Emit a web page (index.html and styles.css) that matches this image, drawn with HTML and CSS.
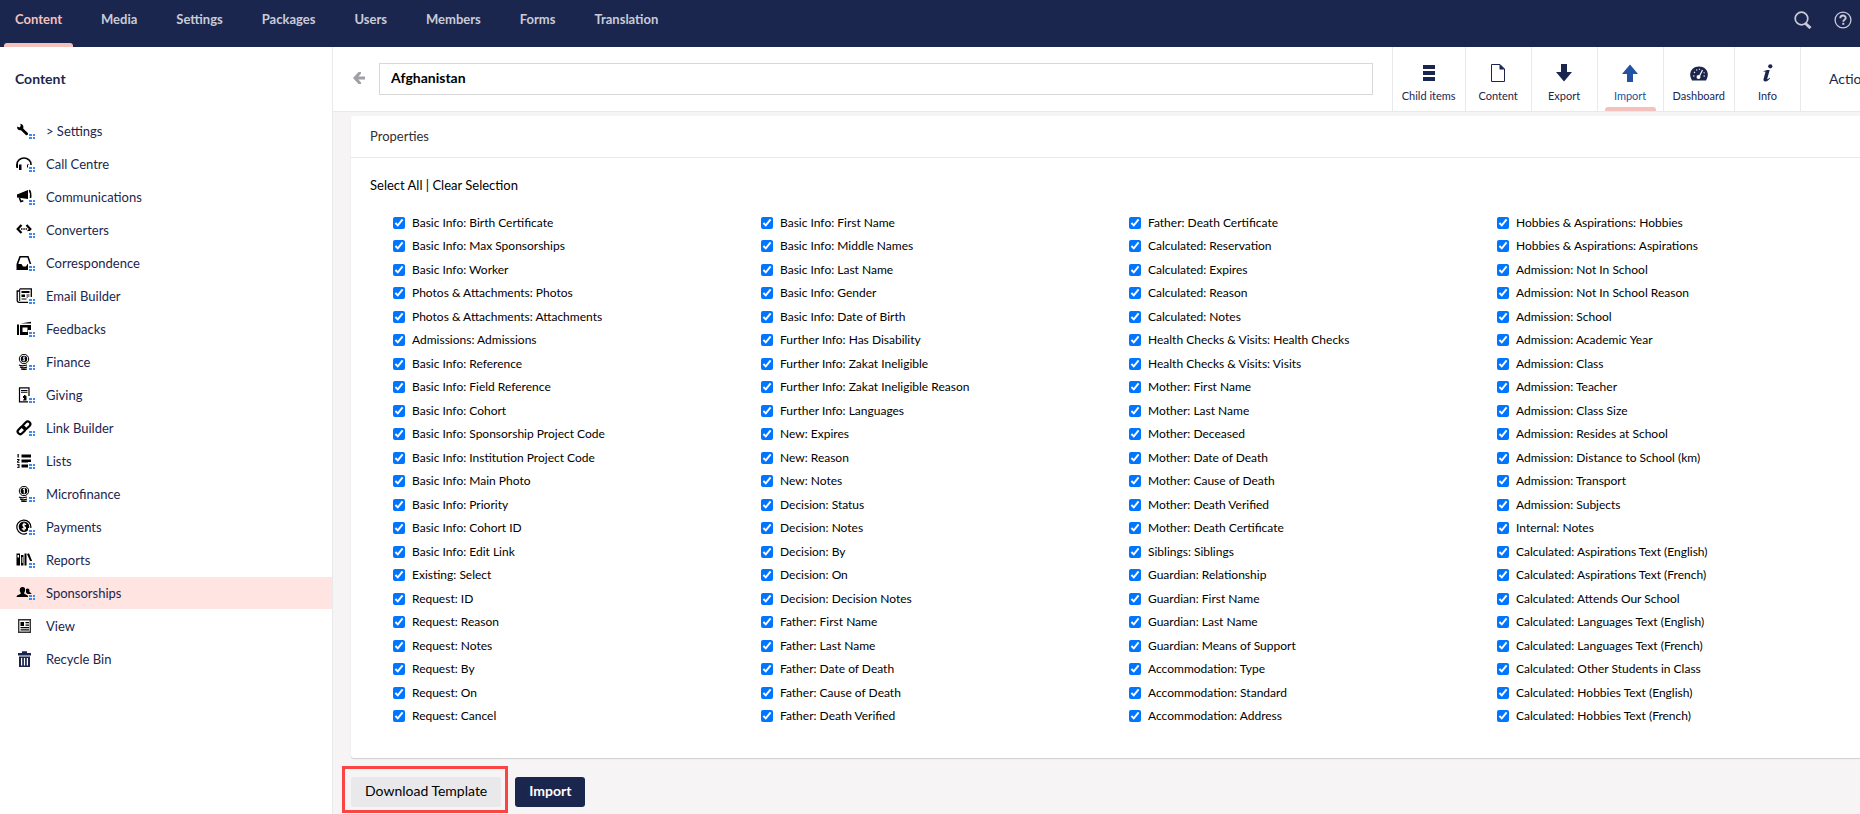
FILE: index.html
```html
<!DOCTYPE html>
<html lang="en">
<head>
<meta charset="utf-8">
<title>Afghanistan - Content</title>
<link rel="stylesheet" href="styles.css">
</head>
<body>
<svg class="defs" aria-hidden="true">
  <symbol id="dots" viewBox="0 0 20 16">
    <path fill="#fff" d="M12 9h8v7h-8z"/>
    <path fill="#3b8af0" d="M13 11h3v2h-3zM17 11h2v2h-2zM13 14h3v2h-3zM17 14h2v2h-2z"/>
  </symbol>
</svg>
<header class="topbar">
  <nav class="sections" aria-label="Sections">
    <a class="section is-active" href="#">Content</a>
    <a class="section" href="#">Media</a>
    <a class="section" href="#">Settings</a>
    <a class="section" href="#">Packages</a>
    <a class="section" href="#">Users</a>
    <a class="section" href="#">Members</a>
    <a class="section" href="#">Forms</a>
    <a class="section" href="#">Translation</a>
  </nav>
  <div class="tools">
    <button class="tool" type="button" aria-label="Search"><svg viewBox="0 0 18 18"><circle cx="7.5" cy="7.5" r="6.3" fill="none" stroke="currentColor" stroke-width="1.7"/><path d="M11.5 12.5l5 4.5" fill="none" stroke="currentColor" stroke-width="3"/></svg></button>
    <button class="tool" type="button" aria-label="Help"><svg viewBox="0 0 18 18" fill="none" stroke="currentColor"><circle cx="9" cy="9" r="7.9" stroke-width="1.3"/><path d="M6.3 7.2c0-3.6 5.4-3.4 5.4-.3 0 1.9-2.4 1.9-2.4 3.8" stroke-width="1.9"/><path d="M8.3 12.8h2" stroke-width="2"/></svg></button>
  </div>
</header>
<div class="layout">
  <aside class="sidebar">
    <h2 class="tree-title">Content</h2>
    <ul class="tree">
      <li><a class="node" href="#"><svg class="icon" viewBox="0 0 20 16"><path d="M4.2.8L4.800 2.900 3.400 4.500 1.200 3.500C.6 6 2.600 7.800 5 7.200L9.800 12c1.300 1 3-.6 2-2L7.200 5.500C8 3 6.600 1 4.200.8z"/><use href="#dots"/></svg>&gt; Settings</a></li>
      <li><a class="node" href="#"><svg class="icon" viewBox="0 0 20 16"><path d="M1 11V8.500a7 6.500 0 0 1 14 0V10" fill="none" stroke="#000" stroke-width="1.500"/><path d="M3 8.500h2.500v5.500H3zM11 8.500h2v3h-2zM.3 8H2v4H.3z"/><use href="#dots"/></svg>Call Centre</a></li>
      <li><a class="node" href="#"><svg class="icon" viewBox="0 0 20 16"><path d="M1 5.500L12 1v9L1 8.500z"/><path d="M13.300 1c1.600 2.500 1.700 5 1.200 8M3.500 9l1.300 3.500 2.500-.8" fill="none" stroke="#000" stroke-width="1.500"/><use href="#dots"/></svg>Communications</a></li>
      <li><a class="node" href="#"><svg class="icon" viewBox="0 0 20 16"><path d="M5.500 3L1.700 7l3.800 4M10.500 3l3.800 4-2.300 2.500" fill="none" stroke="#000" stroke-width="2.200"/><path d="M5 6.200h1.500v1.500H5zM7.300 6.200h1.500v1.500H7.300zM9.600 6.200h1.500v1.500H9.600z"/><use href="#dots"/></svg>Converters</a></li>
      <li><a class="node" href="#"><svg class="icon" viewBox="0 0 20 16"><path d="M3.500 1h9l2.800 8v6H.5V9zM4.600 2.500L2.300 9h3.200l1.500 2.500h3L11.500 9h2.200l-2.300-6.500z" fill-rule="evenodd"/><use href="#dots"/></svg>Correspondence</a></li>
      <li><a class="node" href="#"><svg class="icon" viewBox="0 0 20 16"><path d="M3.700.8h11.600v13.500H3.200c-1.500 0-2-.8-2-2V3h2.500" fill="none" stroke="#000" stroke-width="1.300"/><path d="M3.700 1v12" stroke="#000"/><path d="M5.500 3h8v2h-8zM5.500 6.500h3.500V9H5.500zM10.500 6.500h3v1h-3zM10.500 8.500h3v1h-3zM5.500 10.500h5v1h-5z"/><use href="#dots"/></svg>Email Builder</a></li>
      <li><a class="node" href="#"><svg class="icon" viewBox="0 0 20 16"><path d="M1 3.500h2v10.500H1zM4.500 2.500L15 .8V2.500zM4 4h11v10H4zM6.500 6.500v4.500h5V6.500z" fill-rule="evenodd"/><use href="#dots"/></svg>Feedbacks</a></li>
      <li><a class="node" href="#"><svg class="icon" viewBox="0 0 20 16"><circle cx="8" cy="5" r="4.700" fill="none" stroke="#000" stroke-width="1"/><circle cx="8" cy="5" r="3.200"/><path d="M9.300 3.500c-1.500-1-3 .6-1.400 1.400 1.800.7.500 2.400-1.400 1.500M8 2.500v5" fill="none" stroke="#fff" stroke-width=".8"/><path d="M3 11c2 1 5 1 8 0M4 13c2 1 5 1 7 0M5 15c2 .6 4 .6 6 0" fill="none" stroke="#000" stroke-width="1.200"/><use href="#dots"/></svg>Finance</a></li>
      <li><a class="node" href="#"><svg class="icon" viewBox="0 0 20 16"><path d="M3.500.8h9.500v14H3.500z" fill="none" stroke="#000" stroke-width="1.200"/><path d="M5 3h6.500v1.200H5zM5 5.200h6.500v.8H5zM8 8h1.500v1H8zM7 9h3.500v2H7zM8 11h2.500v2.500H7v-1h1z"/><use href="#dots"/></svg>Giving</a></li>
      <li><a class="node" href="#"><svg class="icon" viewBox="0 0 20 16"><g fill="none" stroke="#000" stroke-width="2.200"><rect x="6.200" y="2.700" width="8.600" height="5.200" rx="2.600" transform="rotate(-45 10.500 5.300)"/><rect x="1.200" y="7.700" width="8.600" height="5.200" rx="2.600" transform="rotate(-45 5.500 10.300)"/></g><use href="#dots"/></svg>Link Builder</a></li>
      <li><a class="node" href="#"><svg class="icon" viewBox="0 0 20 16"><path d="M5.500 1.500H15v3H5.500zM5.500 6.500H15v3H5.500zM5.500 11.500H12v3H5.500zM1.500 1h1.300v3.500H1.500zM1 6h2.500v1.500L2 9h1.500v.8H1V8.500L2.500 7H1zM1 11h2.500v4H1v-.8h1.500v-1H1.500v-.7h1v-.7H1z"/><use href="#dots"/></svg>Lists</a></li>
      <li><a class="node" href="#"><svg class="icon" viewBox="0 0 20 16"><circle cx="8" cy="5" r="4.700" fill="none" stroke="#000" stroke-width="1"/><circle cx="8" cy="5" r="3.300"/><path d="M7 3.500l1.300-.5v4.500" fill="none" stroke="#fff" stroke-width="1.200"/><path d="M3 11c2 1 5 1 8 0M4 13c2 1 5 1 7 0M5 15c2 .6 4 .6 6 0" fill="none" stroke="#000" stroke-width="1.200"/><use href="#dots"/></svg>Microfinance</a></li>
      <li><a class="node" href="#"><svg class="icon" viewBox="0 0 20 16"><path d="M11 14.300A7 7 0 1 1 14.800 9" fill="none" stroke="#000" stroke-width="1.200"/><circle cx="8" cy="7.800" r="5.300"/><path d="M10 5.800C8.300 4 5.500 5.800 7.700 7.400c3.600 1.400 1.400 4-1.900 2.100M8 3.800v8" fill="none" stroke="#fff" stroke-width="1.200"/><use href="#dots"/></svg>Payments</a></li>
      <li><a class="node" href="#"><svg class="icon" viewBox="0 0 20 16"><path d="M.5 1.500H4v12H.5zM1.500 3v2.500H3V3z" fill-rule="evenodd"/><path d="M5 3h2.500v10.500H5zM8.500 1.500h2v12h-2zM11 2l2-.8 4 10-1.500 1z"/><path d="M6.300 5v6" stroke="#fff" stroke-width=".8"/><use href="#dots"/></svg>Reports</a></li>
      <li><a class="node is-selected" href="#"><svg class="icon" viewBox="0 0 20 16"><path d="M6.500 2C9 2 9.500 4 9 6c-.3 1-.8 1.500-.8 2.500 0 .8 3.800 1.200 4.300 3.500H.5c.3-2.500 4.300-2.500 4.300-3.500S4 7 3.800 6C3.400 4 4.200 2 6.500 2z"/><path d="M11.500 3.500c1.800 0 2.300 1.500 1.800 2.800-.3.900 2 1.200 2.200 2.700h-4L10 7.500V4z"/><path fill="#ffe4e1" d="M12 9h8v7h-8z"/><path fill="#3b8af0" d="M13 10h3v2h-3zM17 10h2v2h-2zM13 13h3v2h-3zM17 13h2v2h-2z"/></svg>Sponsorships</a></li>
      <li><a class="node" href="#"><svg class="icon" viewBox="0 0 20 16"><path d="M2.700 1.700h11.600v12.600H2.700z" fill="none" stroke="#333" stroke-width="1.400"/><path d="M4.500 4H8v4H4.500zM9.500 4H13v1.200H9.500zM9.500 6.500H13v1.200H9.500zM4.500 9H13v1.200H4.500zM4.500 11.200H13v1.200H4.500z"/></svg>View</a></li>
      <li><a class="node" href="#"><svg class="icon icon-navy" viewBox="0 0 20 16"><path d="M2 2h4V.3h5V2h4v2.500H2zM3 5.500h11V16H3zM5 7v7.500h1.200V7zM7.900 7v7.500h1.200V7zM10.800 7v7.500H12V7z" fill-rule="evenodd"/></svg>Recycle Bin</a></li>
    </ul>
  </aside>
  <main class="editor">
    <div class="editor-header">
      <button class="back" type="button" aria-label="Back"><svg viewBox="0 0 12 12"><path d="M5.500 0h2.500v1.500L5.500 4.500H12v3H5.500L8 10.500V12H5.500L0 6z"/></svg></button>
      <input class="name" type="text" aria-label="Name" value="Afghanistan">
      <nav class="apps" aria-label="Views">
        <button class="app" type="button"><svg viewBox="0 0 18 18"><path d="M3 1h12v4H3zM3 7h12v4H3zM3 13h12v4H3z"/></svg>Child items</button>
        <button class="app" type="button"><svg viewBox="0 0 18 18"><path d="M2.500.5h8.500l4.500 4.500v12.500h-13z" fill="none" stroke="currentColor"/><path d="M10.500 0L16 5.500h-5.500z"/></svg>Content</button>
        <button class="app" type="button"><svg viewBox="0 0 18 18"><path d="M6 0h6v8h5l-8 9.500L1 8h5z"/></svg>Export</button>
        <button class="app is-current" type="button"><svg viewBox="0 0 18 18"><path d="M6 18h6v-8h5L9 .5 1 10h5z"/></svg>Import</button>
        <button class="app" type="button"><svg viewBox="0 0 18 18"><path d="M2 16.500C-2.500 9 2 2.500 9 2.500s11.500 6.500 7 14z"/><path d="M8.500 14l4-8M3 12h1.500M4 8l1 .7M6.500 5.500l.5 1M9.500 4.800v1M15 12h-1.500M14.500 8.500l-.8.500" fill="none" stroke="#fff" stroke-width="1.200"/><circle cx="8.500" cy="13" r="2" fill="#fff"/></svg>Dashboard</button>
        <button class="app" type="button"><svg viewBox="0 0 18 18"><circle cx="11.300" cy="2.300" r="2.100"/><path d="M4.500 7.200c2-1 3.800-1.300 6.200-1.200L8.300 14.500c-.3 1.200.8.800 2.400-.7l.5.500c-1.500 2-3 3.200-4.700 3.200-1.900 0-2.300-1.200-1.900-2.800L6.500 8c0-.6-.8-.6-1.900-.1z"/></svg>Info</button>
      </nav>
      <button class="actions" type="button">Actions</button>
    </div>
    <section class="card">
      <h3 class="card-title">Properties</h3>
      <div class="card-body">
        <div class="selection"><a href="#">Select All</a> | <a href="#">Clear Selection</a></div>
        <div class="fields">
          <label><input type="checkbox" checked>Basic Info: Birth Certificate</label>
          <label><input type="checkbox" checked>Basic Info: Max Sponsorships</label>
          <label><input type="checkbox" checked>Basic Info: Worker</label>
          <label><input type="checkbox" checked>Photos &amp; Attachments: Photos</label>
          <label><input type="checkbox" checked>Photos &amp; Attachments: Attachments</label>
          <label><input type="checkbox" checked>Admissions: Admissions</label>
          <label><input type="checkbox" checked>Basic Info: Reference</label>
          <label><input type="checkbox" checked>Basic Info: Field Reference</label>
          <label><input type="checkbox" checked>Basic Info: Cohort</label>
          <label><input type="checkbox" checked>Basic Info: Sponsorship Project Code</label>
          <label><input type="checkbox" checked>Basic Info: Institution Project Code</label>
          <label><input type="checkbox" checked>Basic Info: Main Photo</label>
          <label><input type="checkbox" checked>Basic Info: Priority</label>
          <label><input type="checkbox" checked>Basic Info: Cohort ID</label>
          <label><input type="checkbox" checked>Basic Info: Edit Link</label>
          <label><input type="checkbox" checked>Existing: Select</label>
          <label><input type="checkbox" checked>Request: ID</label>
          <label><input type="checkbox" checked>Request: Reason</label>
          <label><input type="checkbox" checked>Request: Notes</label>
          <label><input type="checkbox" checked>Request: By</label>
          <label><input type="checkbox" checked>Request: On</label>
          <label><input type="checkbox" checked>Request: Cancel</label>
          <label><input type="checkbox" checked>Basic Info: First Name</label>
          <label><input type="checkbox" checked>Basic Info: Middle Names</label>
          <label><input type="checkbox" checked>Basic Info: Last Name</label>
          <label><input type="checkbox" checked>Basic Info: Gender</label>
          <label><input type="checkbox" checked>Basic Info: Date of Birth</label>
          <label><input type="checkbox" checked>Further Info: Has Disability</label>
          <label><input type="checkbox" checked>Further Info: Zakat Ineligible</label>
          <label><input type="checkbox" checked>Further Info: Zakat Ineligible Reason</label>
          <label><input type="checkbox" checked>Further Info: Languages</label>
          <label><input type="checkbox" checked>New: Expires</label>
          <label><input type="checkbox" checked>New: Reason</label>
          <label><input type="checkbox" checked>New: Notes</label>
          <label><input type="checkbox" checked>Decision: Status</label>
          <label><input type="checkbox" checked>Decision: Notes</label>
          <label><input type="checkbox" checked>Decision: By</label>
          <label><input type="checkbox" checked>Decision: On</label>
          <label><input type="checkbox" checked>Decision: Decision Notes</label>
          <label><input type="checkbox" checked>Father: First Name</label>
          <label><input type="checkbox" checked>Father: Last Name</label>
          <label><input type="checkbox" checked>Father: Date of Death</label>
          <label><input type="checkbox" checked>Father: Cause of Death</label>
          <label><input type="checkbox" checked>Father: Death Verified</label>
          <label><input type="checkbox" checked>Father: Death Certificate</label>
          <label><input type="checkbox" checked>Calculated: Reservation</label>
          <label><input type="checkbox" checked>Calculated: Expires</label>
          <label><input type="checkbox" checked>Calculated: Reason</label>
          <label><input type="checkbox" checked>Calculated: Notes</label>
          <label><input type="checkbox" checked>Health Checks &amp; Visits: Health Checks</label>
          <label><input type="checkbox" checked>Health Checks &amp; Visits: Visits</label>
          <label><input type="checkbox" checked>Mother: First Name</label>
          <label><input type="checkbox" checked>Mother: Last Name</label>
          <label><input type="checkbox" checked>Mother: Deceased</label>
          <label><input type="checkbox" checked>Mother: Date of Death</label>
          <label><input type="checkbox" checked>Mother: Cause of Death</label>
          <label><input type="checkbox" checked>Mother: Death Verified</label>
          <label><input type="checkbox" checked>Mother: Death Certificate</label>
          <label><input type="checkbox" checked>Siblings: Siblings</label>
          <label><input type="checkbox" checked>Guardian: Relationship</label>
          <label><input type="checkbox" checked>Guardian: First Name</label>
          <label><input type="checkbox" checked>Guardian: Last Name</label>
          <label><input type="checkbox" checked>Guardian: Means of Support</label>
          <label><input type="checkbox" checked>Accommodation: Type</label>
          <label><input type="checkbox" checked>Accommodation: Standard</label>
          <label><input type="checkbox" checked>Accommodation: Address</label>
          <label><input type="checkbox" checked>Hobbies &amp; Aspirations: Hobbies</label>
          <label><input type="checkbox" checked>Hobbies &amp; Aspirations: Aspirations</label>
          <label><input type="checkbox" checked>Admission: Not In School</label>
          <label><input type="checkbox" checked>Admission: Not In School Reason</label>
          <label><input type="checkbox" checked>Admission: School</label>
          <label><input type="checkbox" checked>Admission: Academic Year</label>
          <label><input type="checkbox" checked>Admission: Class</label>
          <label><input type="checkbox" checked>Admission: Teacher</label>
          <label><input type="checkbox" checked>Admission: Class Size</label>
          <label><input type="checkbox" checked>Admission: Resides at School</label>
          <label><input type="checkbox" checked>Admission: Distance to School (km)</label>
          <label><input type="checkbox" checked>Admission: Transport</label>
          <label><input type="checkbox" checked>Admission: Subjects</label>
          <label><input type="checkbox" checked>Internal: Notes</label>
          <label><input type="checkbox" checked>Calculated: Aspirations Text (English)</label>
          <label><input type="checkbox" checked>Calculated: Aspirations Text (French)</label>
          <label><input type="checkbox" checked>Calculated: Attends Our School</label>
          <label><input type="checkbox" checked>Calculated: Languages Text (English)</label>
          <label><input type="checkbox" checked>Calculated: Languages Text (French)</label>
          <label><input type="checkbox" checked>Calculated: Other Students in Class</label>
          <label><input type="checkbox" checked>Calculated: Hobbies Text (English)</label>
          <label><input type="checkbox" checked>Calculated: Hobbies Text (French)</label>
        </div>
      </div>
    </section>
    <footer class="editor-footer">
      <div class="highlight"><button class="btn" type="button">Download Template</button></div>
      <button class="btn btn-primary" type="button">Import</button>
    </footer>
  </main>
</div>
</body>
</html>
```
FILE: styles.css
```css
* { box-sizing: border-box; }

body {
  margin: 0;
  height: 100vh;
  display: flex;
  flex-direction: column;
  overflow: hidden;
  font-family: Lato, "Liberation Sans", sans-serif;
  font-size: 13px;
  line-height: 20px;
  color: #000;
  background: #fff;
}

button, input { font: inherit; color: inherit; }
button { border: 0; background: none; padding: 0; cursor: pointer; }
a { color: inherit; text-decoration: none; }
.defs { display: none; }

/* Top bar */
.topbar {
  flex: none;
  height: 47px;
  padding: 0 8px 0 4px;
  display: flex;
  justify-content: space-between;
  background: #1b264f;
  color: #c9ccd6;
}
.sections { display: flex; gap: 17px; }
.section {
  position: relative;
  padding: 9px 11px 0;
  font-weight: 700;
}
.section.is-active { color: #f5c1bc; }
.section.is-active::after {
  content: "";
  position: absolute;
  left: 0;
  right: 0;
  bottom: 0;
  height: 4px;
  border-radius: 3px 3px 0 0;
  background: #f5c1bc;
}
.tools { display: flex; gap: 22px; padding-bottom: 7px; }
.tool { display: flex; align-items: center; }
.tool svg { width: 18px; height: 18px; }

.layout { flex: 1; min-height: 0; display: flex; }

/* Content tree */
.sidebar {
  flex: none;
  width: 333px;
  border-right: 1px solid #e9e9eb;
  color: #1b264f;
}
.tree-title {
  margin: 0;
  padding: 22px 15px 26px;
  font-size: 14px;
  line-height: 20px;
  font-weight: 700;
}
.tree { list-style: none; margin: 0; padding: 0; display: grid; gap: 1px; }
.node {
  display: flex;
  align-items: center;
  gap: 10px;
  height: 32px;
  padding-left: 16px;
}
.node.is-selected { background: #ffe4e1; }
.icon { width: 20px; height: 16px; fill: #000; }
.icon-navy { fill: #1b264f; }

/* Editor */
.editor {
  flex: 1;
  min-width: 0;
  display: flex;
  flex-direction: column;
  background: #f6f4f5;
}
.editor-header {
  flex: none;
  height: 65px;
  display: flex;
  align-items: center;
  background: #fff;
  border-bottom: 1px solid #e9e9eb;
  color: #1b264f;
}
.back { flex: none; display: flex; margin: 0 14px 2px 20px; }
.back svg { width: 12px; height: 12px; fill: #a0a0a6; }
.name {
  flex: 1;
  min-width: 0;
  height: 32px;
  margin-right: 19px;
  padding: 0 11px 4px;
  border: 1px solid #d8d7d9;
  font-size: 14px;
  font-weight: 700;
  color: #000;
}
.apps { align-self: stretch; display: flex; }
.app {
  position: relative;
  min-width: 66px;
  padding: 11px 9px 0;
  display: flex;
  flex-direction: column;
  align-items: center;
  justify-content: center;
  gap: 4px;
  border-left: 1px solid #e9e9eb;
  font-size: 11px;
}
.app svg { width: 18px; height: 18px; fill: currentColor; }
.app.is-current { color: #2152a3; }
.app.is-current::after {
  content: "";
  position: absolute;
  left: 7px;
  right: 7px;
  bottom: 0;
  height: 4px;
  border-radius: 3px 3px 0 0;
  background: #f5c1bc;
}
.actions {
  flex: 0 0 60px;
  align-self: stretch;
  padding-left: 28px;
  overflow: hidden;
  border-left: 1px solid #e9e9eb;
  font-size: 14px;
  text-align: left;
  white-space: nowrap;
}

/* Property card */
.card {
  flex: 1;
  min-height: 0;
  margin: 4px 0 0 18px;
  display: flex;
  flex-direction: column;
  background: #fff;
  border-radius: 3px 0 0 3px;
  box-shadow: 0 1px 1px rgba(0, 0, 0, 0.16);
}
.card-title {
  margin: 0;
  padding: 10px 19px 11px;
  font-size: 13px;
  line-height: 20px;
  font-weight: 400;
  color: #303033;
  border-bottom: 1px solid #e9e9eb;
}
.card-body {
  flex: 1;
  min-height: 0;
  padding: 17px 0 30px 19px;
  display: flex;
  flex-direction: column;
  gap: 16px;
}
.fields {
  flex: 1;
  padding-left: 23px;
  display: grid;
  grid-auto-flow: column;
  grid-template-rows: repeat(22, 1fr);
  grid-template-columns: repeat(4, 1fr);
  column-gap: 5px;
  font-size: 12px;
  line-height: 16px;
}
.fields label { display: flex; align-items: center; gap: 7px; white-space: nowrap; }
.fields input { width: 12px; height: 12px; margin: 0; }

/* Footer buttons */
.editor-footer {
  flex: none;
  display: flex;
  gap: 14px;
  padding: 19px 18px 7px;
}
.btn {
  height: 30px;
  padding: 0 14px 2px;
  border-radius: 3px;
  font-size: 14px;
  background: #e9e9eb;
}
.btn-primary { background: #1b264f; color: #fff; font-weight: 700; }
.highlight { position: relative; }
.highlight::after {
  content: "";
  position: absolute;
  inset: -11px -7px -6px -9px;
  border: 3px solid #fb4444;
  pointer-events: none;
}
```
